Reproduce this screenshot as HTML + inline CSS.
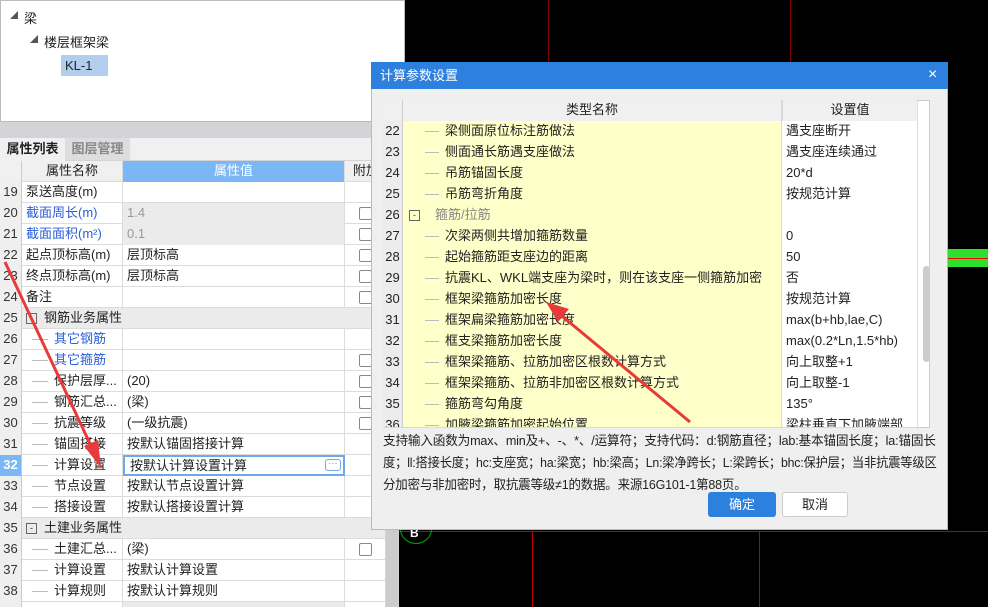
<!DOCTYPE html>
<html><head><meta charset="utf-8"><style>
*{margin:0;padding:0;box-sizing:border-box}
html{width:988px;height:607px;overflow:hidden}
body{width:988px;height:607px;overflow:hidden;background:#000;position:relative;font-family:"Liberation Sans","Noto Sans CJK SC",sans-serif;font-size:13px;color:#222}
.a{position:absolute}
.row{position:absolute;left:0;height:21px;width:385px;border-bottom:1px solid #dcdcdc}
.row>div{position:absolute;top:0;height:21px;line-height:20px;white-space:nowrap;overflow:hidden}
.n{left:0;width:22px;background:#efefef;border-right:1px solid #ccc;text-align:center;color:#333}
.nm{left:22px;width:101px;border-right:1px solid #dcdcdc;padding-left:4px}
.v{left:123px;width:222px;border-right:1px solid #dcdcdc;padding-left:4px}
.x{left:345px;width:40px}
.cb{position:absolute;left:14px;top:4px;width:13px;height:13px;border:1px solid #888;border-radius:2px;background:#fff}
.blue{color:#2a5fd8}
.g{background:#ebebeb}
.dr{position:absolute;left:383px;width:534px;height:21px;border-bottom:1px solid #d8d8d8}
.dr>div{position:absolute;top:0;height:21px;line-height:20px;white-space:nowrap;overflow:hidden}
.dn{left:0;width:20px;background:#ececec;border-right:1px solid #ccc;text-align:center}
.dm{left:20px;width:379px;background:#ffffc9;border-right:1px solid #d8d8d8;padding-left:42px}
.dv{left:399px;width:135px;background:#fff;padding-left:4px}
.dm.t::before{content:"";position:absolute;left:22px;top:10px;width:14px;border-top:1px solid #bbb}
.nm.t::before{content:"";position:absolute;left:10px;top:10px;width:16px;border-top:1px solid #bbb}
.hl{position:absolute;left:383px;height:22px;line-height:22px;white-space:nowrap;letter-spacing:-0.2px;transform-origin:0 50%}
</style></head><body>
<div class="a" style="left:548px;top:0;width:1px;height:62px;background:#8a0000"></div>
<div class="a" style="left:790px;top:0;width:1px;height:62px;background:#8a0000"></div>
<div class="a" style="left:399px;top:531px;width:589px;height:1px;background:#c00000"></div>
<div class="a" style="left:532px;top:531px;width:1px;height:76px;background:#c00000"></div>
<div class="a" style="left:759px;top:531px;width:1px;height:76px;background:#c00000"></div>
<div class="a" style="left:948px;top:249px;width:40px;height:18px;background:#2ee02e"></div>
<div class="a" style="left:948px;top:258px;width:40px;height:1px;background:#f00"></div>
<div class="a" style="left:400px;top:514px;width:32px;height:30px;border:1px solid #0a0;border-radius:50%"></div>
<div class="a" style="left:410px;top:526px;color:#fff;font-weight:bold;font-size:12px">B</div>

<div class="a" style="left:0;top:0;width:405px;height:122px;background:#fff;border:1px solid #bbb"></div>
<div class="a" style="left:10px;top:10px;font-size:8px;color:#555">◢</div>
<div class="a" style="left:24px;top:8px">梁</div>
<div class="a" style="left:30px;top:34px;font-size:8px;color:#555">◢</div>
<div class="a" style="left:44px;top:32px">楼层框架梁</div>
<div class="a" style="left:61px;top:55px;width:47px;height:21px;background:#b3cdec;line-height:21px;padding-left:4px">KL-1</div>
<div class="a" style="left:0;top:122px;width:399px;height:485px;background:#d4d4d8"></div>
<div class="a" style="left:0;top:138px;width:399px;height:22px;background:#f0f0f0"></div>
<div class="a" style="left:0;top:138px;width:65px;height:23px;background:#f0f0f0;line-height:22px;text-align:center;font-weight:bold">属性列表</div>
<div class="a" style="left:65px;top:138px;width:65px;height:22px;background:#ddd;line-height:22px;text-align:center;color:#888;font-weight:bold">图层管理</div>
<div class="a" style="left:0;top:161px;width:385px;height:446px;background:#fff"></div>
<div class="a" style="left:386px;top:161px;width:12px;height:446px;background:#ccc"></div>
<div class="row" style="top:161px;background:#f0f0f0"><div class="n" style="background:#f0f0f0"></div><div class="nm" style="text-align:center;padding:0">属性名称</div><div class="v" style="background:#7cb7f5;color:#fff;text-align:center;padding:0">属性值</div><div class="x" style="padding-left:8px">附加</div></div>

<div class="row" style="top:182px"><div class="n">19</div><div class="nm">泵送高度(m)</div><div class="v"></div><div class="x"></div></div>
<div class="row" style="top:203px"><div class="n">20</div><div class="nm blue">截面周长(m)</div><div class="v g" style="color:#999">1.4</div><div class="x"><span class="cb"></span></div></div>
<div class="row" style="top:224px"><div class="n">21</div><div class="nm blue">截面面积(m²)</div><div class="v g" style="color:#999">0.1</div><div class="x"><span class="cb"></span></div></div>
<div class="row" style="top:245px"><div class="n">22</div><div class="nm">起点顶标高(m)</div><div class="v">层顶标高</div><div class="x"><span class="cb"></span></div></div>
<div class="row" style="top:266px"><div class="n">23</div><div class="nm">终点顶标高(m)</div><div class="v">层顶标高</div><div class="x"><span class="cb"></span></div></div>
<div class="row" style="top:287px"><div class="n">24</div><div class="nm">备注</div><div class="v"></div><div class="x"><span class="cb"></span></div></div>
<div class="row g" style="top:308px"><div class="n">25</div><div class="nm" style="border:none;padding-left:22px;width:300px">钢筋业务属性</div><div style="left:26px;top:5px;width:11px;height:11px;border:1px solid #666;font-size:9px;line-height:8px;text-align:center">-</div></div>
<div class="row" style="top:329px"><div class="n">26</div><div class="nm blue t" style="padding-left:32px">其它钢筋</div><div class="v"></div></div>
<div class="row" style="top:350px"><div class="n">27</div><div class="nm blue t" style="padding-left:32px">其它箍筋</div><div class="v"></div><div class="x"><span class="cb"></span></div></div>
<div class="row" style="top:371px"><div class="n">28</div><div class="nm t" style="padding-left:32px">保护层厚...</div><div class="v">(20)</div><div class="x"><span class="cb"></span></div></div>
<div class="row" style="top:392px"><div class="n">29</div><div class="nm t" style="padding-left:32px">钢筋汇总...</div><div class="v">(梁)</div><div class="x"><span class="cb"></span></div></div>
<div class="row" style="top:413px"><div class="n">30</div><div class="nm t" style="padding-left:32px">抗震等级</div><div class="v">(一级抗震)</div><div class="x"><span class="cb"></span></div></div>
<div class="row" style="top:434px"><div class="n">31</div><div class="nm t" style="padding-left:32px">锚固搭接</div><div class="v">按默认锚固搭接计算</div><div class="x"></div></div>
<div class="row" style="top:455px"><div class="n" style="background:#7cb7f5;color:#fff;font-weight:bold">32</div><div class="nm t" style="padding-left:32px">计算设置</div><div class="v" style="border:2px solid #6fa8e8;padding-left:5px;line-height:17px">按默认计算设置计算<span class="a" style="right:2px;top:2px;width:16px;height:12px;border:1px solid #6fa8e8;border-radius:3px;font-size:9px;line-height:6px;text-align:center;color:#4a8ad8">···</span></div><div class="x"></div></div>
<div class="row" style="top:476px"><div class="n">33</div><div class="nm t" style="padding-left:32px">节点设置</div><div class="v">按默认节点设置计算</div><div class="x"></div></div>
<div class="row" style="top:497px"><div class="n">34</div><div class="nm t" style="padding-left:32px">搭接设置</div><div class="v">按默认搭接设置计算</div><div class="x"></div></div>
<div class="row g" style="top:518px"><div class="n">35</div><div class="nm" style="border:none;padding-left:22px;width:300px">土建业务属性</div><div style="left:26px;top:5px;width:11px;height:11px;border:1px solid #666;font-size:9px;line-height:8px;text-align:center">-</div></div>
<div class="row" style="top:539px"><div class="n">36</div><div class="nm t" style="padding-left:32px">土建汇总...</div><div class="v">(梁)</div><div class="x"><span class="cb"></span></div></div>
<div class="row" style="top:560px"><div class="n">37</div><div class="nm t" style="padding-left:32px">计算设置</div><div class="v">按默认计算设置</div><div class="x"></div></div>
<div class="row" style="top:581px"><div class="n">38</div><div class="nm t" style="padding-left:32px">计算规则</div><div class="v">按默认计算规则</div><div class="x"></div></div>
<div class="row" style="top:602px;height:5px;border:none"><div class="n" style="height:5px"></div><div class="nm" style="height:5px"></div><div class="v g" style="height:5px"></div></div>

<div class="a" style="left:371px;top:62px;width:577px;height:468px;background:#efefef;border:1px solid #bbb"></div>
<div class="a" style="left:371px;top:62px;width:577px;height:27px;background:#2e80de;color:#fff;line-height:27px;padding-left:9px">计算参数设置</div>
<div class="a" style="left:928px;top:63px;color:#fff;font-size:16px;line-height:24px">×</div>
<div class="a" style="left:383px;top:100px;width:547px;height:328px;background:#fff;border:1px solid #ccc"></div>
<div class="dr" style="top:100px;background:#f0f0f0"><div class="dn" style="background:#f0f0f0"></div><div class="dm" style="background:#f0f0f0;text-align:center;padding:0">类型名称</div><div class="dv" style="background:#f0f0f0;text-align:center;padding:0;border-left:1px solid #d8d8d8">设置值</div></div>
<div class="dr" style="top:121px"><div class="dn">22</div><div class="dm t">梁侧面原位标注筋做法</div><div class="dv">遇支座断开</div></div>
<div class="dr" style="top:142px"><div class="dn">23</div><div class="dm t">侧面通长筋遇支座做法</div><div class="dv">遇支座连续通过</div></div>
<div class="dr" style="top:163px"><div class="dn">24</div><div class="dm t">吊筋锚固长度</div><div class="dv">20*d</div></div>
<div class="dr" style="top:184px"><div class="dn">25</div><div class="dm t">吊筋弯折角度</div><div class="dv">按规范计算</div></div>
<div class="dr" style="top:205px"><div class="dn">26</div><div class="dm" style="padding-left:32px;color:#888">箍筋/拉筋</div><div style="left:26px;top:5px;width:11px;height:11px;border:1px solid #666;font-size:9px;line-height:8px;text-align:center;color:#444;background:#ffffc9">-</div><div class="dv"></div></div>
<div class="dr" style="top:226px"><div class="dn">27</div><div class="dm t">次梁两侧共增加箍筋数量</div><div class="dv">0</div></div>
<div class="dr" style="top:247px"><div class="dn">28</div><div class="dm t">起始箍筋距支座边的距离</div><div class="dv">50</div></div>
<div class="dr" style="top:268px"><div class="dn">29</div><div class="dm t">抗震KL、WKL端支座为梁时，则在该支座一侧箍筋加密</div><div class="dv">否</div></div>
<div class="dr" style="top:289px"><div class="dn">30</div><div class="dm t">框架梁箍筋加密长度</div><div class="dv">按规范计算</div></div>
<div class="dr" style="top:310px"><div class="dn">31</div><div class="dm t">框架扁梁箍筋加密长度</div><div class="dv">max(b+hb,lae,C)</div></div>
<div class="dr" style="top:331px"><div class="dn">32</div><div class="dm t">框支梁箍筋加密长度</div><div class="dv">max(0.2*Ln,1.5*hb)</div></div>
<div class="dr" style="top:352px"><div class="dn">33</div><div class="dm t">框架梁箍筋、拉筋加密区根数计算方式</div><div class="dv">向上取整+1</div></div>
<div class="dr" style="top:373px"><div class="dn">34</div><div class="dm t">框架梁箍筋、拉筋非加密区根数计算方式</div><div class="dv">向上取整-1</div></div>
<div class="dr" style="top:394px"><div class="dn">35</div><div class="dm t">箍筋弯勾角度</div><div class="dv">135°</div></div>
<div class="dr" style="top:415px;height:13px;overflow:hidden"><div class="dn">36</div><div class="dm t">加腋梁箍筋加密起始位置</div><div class="dv">梁柱垂直下加腋端部</div></div>
<div class="a" style="left:917px;top:101px;width:12px;height:326px;background:#fff;border-left:1px solid #ddd"></div>
<div class="a" style="left:923px;top:266px;width:7px;height:96px;background:#ccc;border-radius:4px"></div>
<div class="hl" style="top:430px;transform:scaleX(0.972)">支持输入函数为max、min及+、-、*、/运算符；支持代码：d:钢筋直径；lab:基本锚固长度；la:锚固长</div>
<div class="hl" style="top:452px;transform:scaleX(0.945)">度；ll:搭接长度；hc:支座宽；ha:梁宽；hb:梁高；Ln:梁净跨长；L:梁跨长；bhc:保护层；当非抗震等级区</div>
<div class="hl" style="top:474px;transform:scaleX(0.96)">分加密与非加密时，取抗震等级≠1的数据。来源16G101-1第88页。</div>
<div class="a" style="left:708px;top:492px;width:68px;height:25px;background:#2e80de;color:#fff;text-align:center;line-height:25px;border-radius:3px">确定</div>
<div class="a" style="left:782px;top:492px;width:66px;height:25px;background:#fff;border:1px solid #ccc;text-align:center;line-height:23px;border-radius:3px">取消</div>

<svg class="a" style="left:0;top:0" width="988" height="607">
<line x1="5" y1="262" x2="92" y2="448" stroke="#e83a3a" stroke-width="3"/>
<polygon points="101,468 84,446 98,440" fill="#e83a3a"/>
<line x1="690" y1="422" x2="557" y2="312" stroke="#e83a3a" stroke-width="3"/>
<polygon points="546,302 569,309 558,322" fill="#e83a3a"/>
</svg>
</body></html>
